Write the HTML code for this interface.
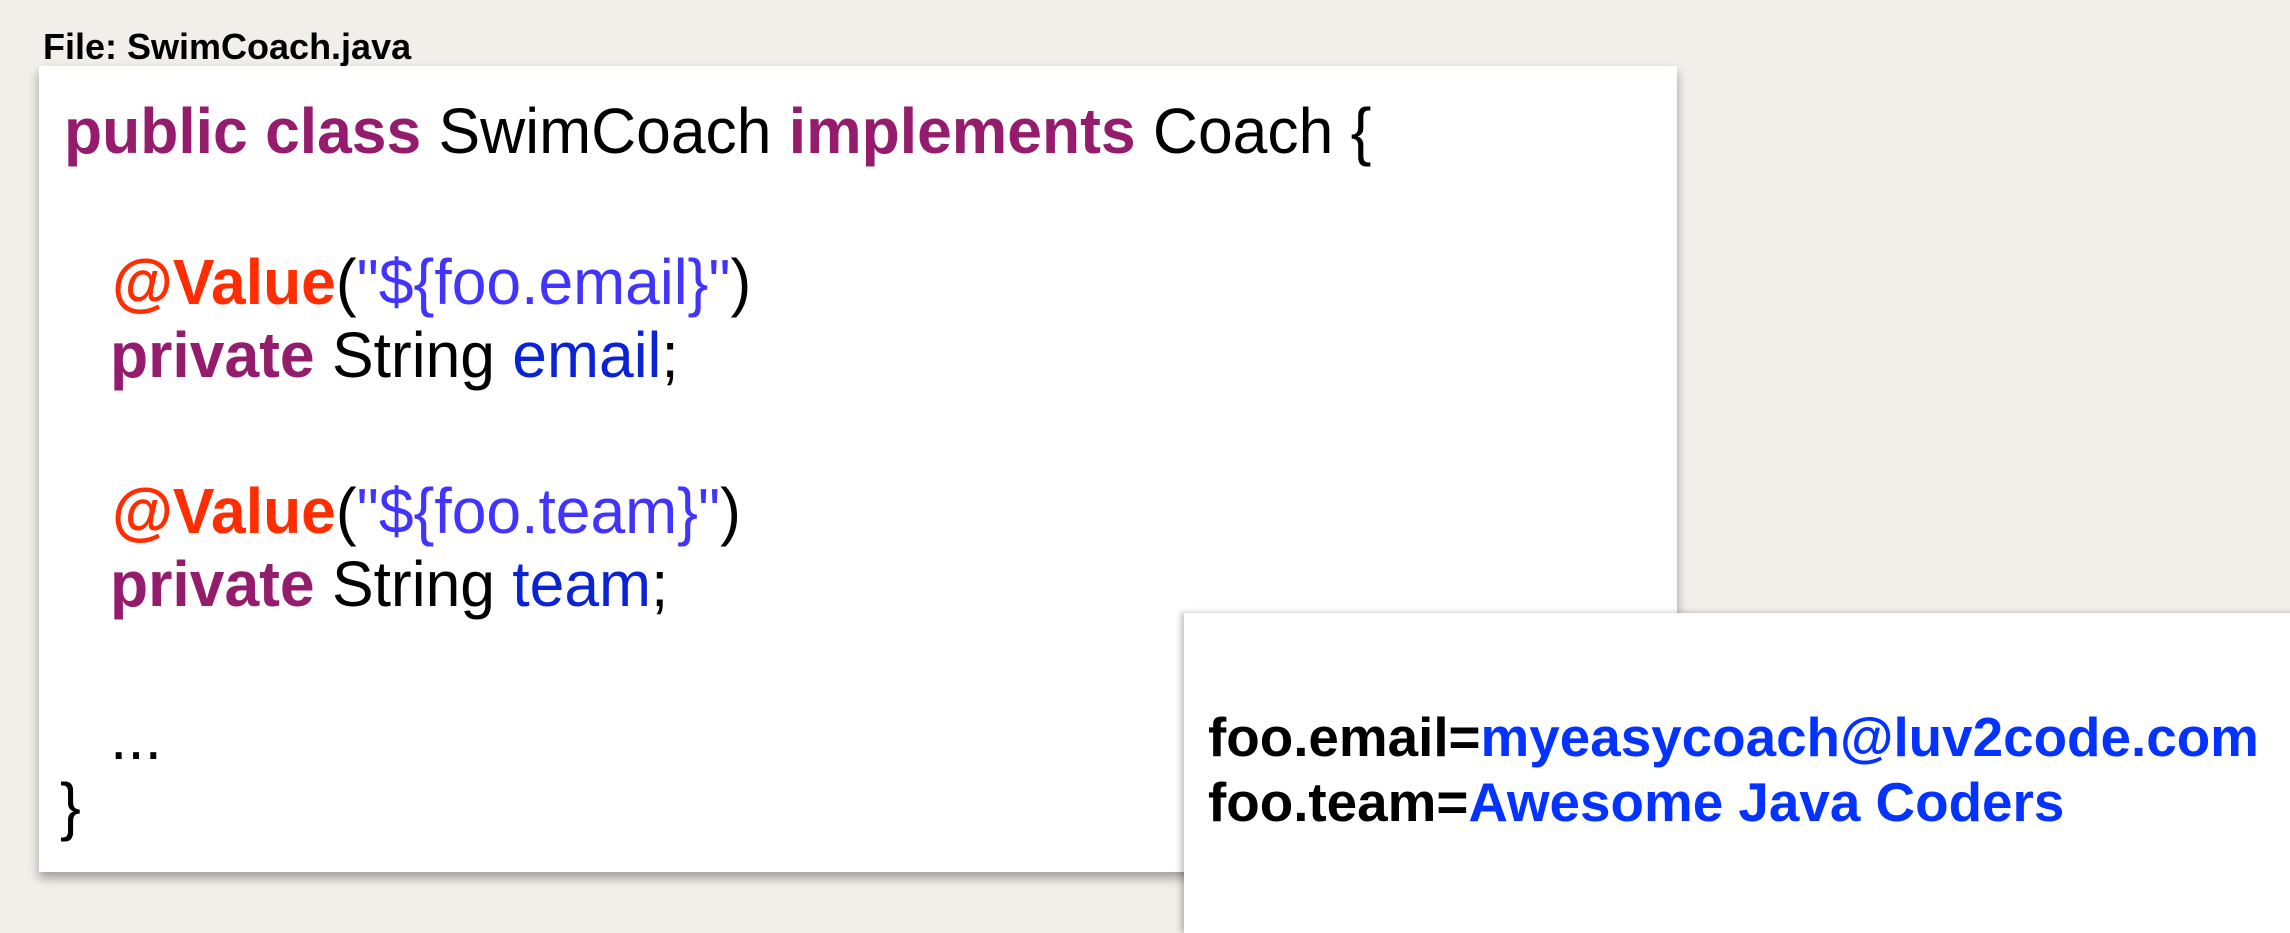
<!DOCTYPE html>
<html><head><style>
html,body{margin:0;padding:0}
body{width:2290px;height:904px;background:#f2efea;position:relative;overflow:hidden;font-family:"Liberation Sans",Arial,sans-serif}
.t{position:absolute;white-space:pre;line-height:1;transform-origin:0 0}
.b{font-weight:bold}
.p{color:#951b6c;font-weight:bold}
.r{color:#ff2d00;font-weight:bold}
.lb{color:#4134ff}
.db{color:#0a24d4}
.box1{position:absolute;left:39px;top:66px;width:1638px;height:806px;background:#fff;box-shadow:0 6px 10px rgba(0,0,0,.35)}
.box2{position:absolute;left:1184px;top:613px;width:1120px;height:320px;background:#fff;box-shadow:-3px 0 6px rgba(0,0,0,.25)}
.c{font-size:64px;color:#000;transform:scaleX(0.975)}
.pr{font-size:54.8px;font-weight:bold;color:#000}
.pb{color:#0433ff}
</style></head><body>
<div class="t b" style="left:43px;top:29px;font-size:36px">File: SwimCoach.java</div>
<div class="box1"></div>
<div class="t c" style="left:64px;top:99px"><span class="p">public class</span> SwimCoach <span class="p">implements</span> Coach {</div>
<div class="t c" style="left:112px;top:250px"><span class="r">@Value</span>(<span class="lb">"${foo.email}"</span>)</div>
<div class="t c" style="left:110px;top:323px"><span class="p">private</span> String <span class="db">email</span>;</div>
<div class="t c" style="left:112px;top:479px"><span class="r">@Value</span>(<span class="lb">"${foo.team}"</span>)</div>
<div class="t c" style="left:110px;top:552px"><span class="p">private</span> String <span class="db">team</span>;</div>
<div class="t c" style="left:110px;top:705px">...</div>
<div class="t c" style="left:60px;top:774px">}</div>
<div class="box2"></div>
<div class="t pr" style="left:1208px;top:710px">foo.email=<span class="pb">myeasycoach@luv2code.com</span></div>
<div class="t pr" style="left:1208px;top:775px">foo.team=<span class="pb">Awesome Java Coders</span></div>
</body></html>
